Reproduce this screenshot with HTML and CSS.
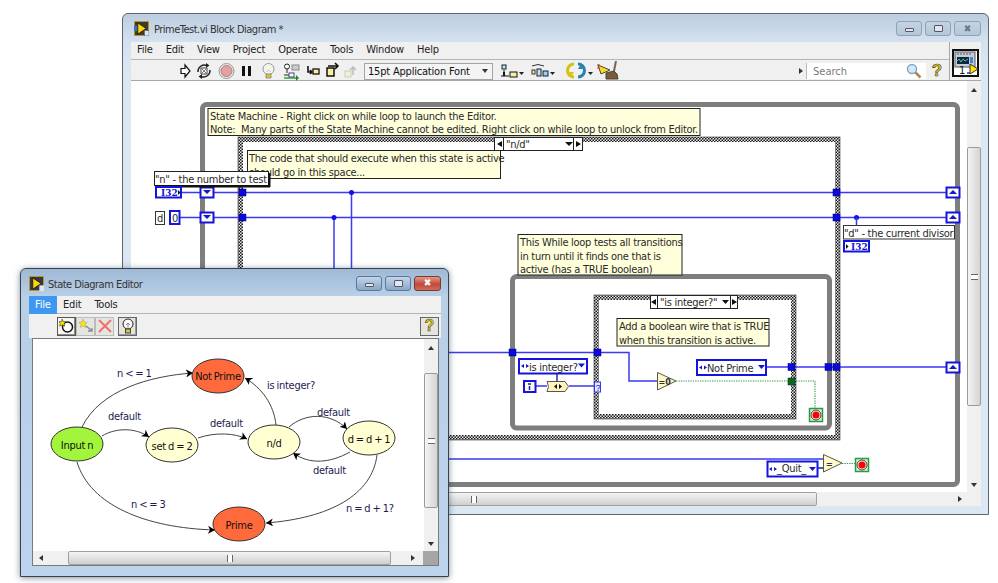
FILE: index.html
```html
<!DOCTYPE html>
<html lang="en">
<head>
<meta charset="utf-8">
<title>PrimeTest.vi Block Diagram</title>
<link rel="stylesheet" href="styles.css">
</head>
<body>
<div class="desktop">

<section class="win win-back">
  <header class="titlebar">
    <svg class="appicon" viewBox="0 0 16 16"><rect width="16" height="16" fill="#c89a20"/><rect x="1" y="1" width="14" height="14" fill="#3c3a30"/><rect x="0" y="5" width="4" height="6" fill="#3a70c0"/><path d="M4 2 L13 8 L4 14Z" fill="#ffd800" stroke="#222"/><rect x="11" y="10" width="5" height="6" fill="#dfe6f2" stroke="#444" stroke-width=".6"/></svg>
    <span class="wintitle">PrimeTest.vi Block Diagram *</span>
    <div class="winbtns">
      <span class="wbtn"><i class="g-min"></i></span>
      <span class="wbtn"><i class="g-max"></i></span>
      <span class="wbtn wbtn-close">✖</span>
    </div>
  </header>
  <div class="chrome">
    <div class="bars">
      <nav class="menubar"><span>File</span><span>Edit</span><span>View</span><span>Project</span><span>Operate</span><span>Tools</span><span>Window</span><span>Help</span></nav>
      <div class="toolbar">
        <svg class="tb-run" width="183" height="20" viewBox="176 60 183 20">
          <path d="M181 70 l0 -2.500 h4 v-3.500 l5 6 -5 6 v-3.500 h-4z" fill="#fff" stroke="#111" stroke-width="1.200"/>
          <path d="M198 71 a6.500 6.500 0 0 1 9 -6.500 M210 69 a6.500 6.500 0 0 1 -9 6.500" fill="none" stroke="#222" stroke-width="1.400"/><path d="M206 62l3.500 2.500-3.500 2.500zM202 73l-3.500 2.500 3.500 2.500z" fill="#222"/><path d="M201 67h6v6h-6z" fill="#fff" stroke="#444"/><path d="M202 68l4 4M206 68l-4 4" stroke="#444" stroke-width=".7"/>
          <circle cx="226.500" cy="70" r="7.500" fill="#e8e8e8" stroke="#999"/><circle cx="226.500" cy="70" r="5.500" fill="#e4a0a0" stroke="#b08080"/>
          <rect x="242" y="65" width="3" height="10" fill="#111"/><rect x="248" y="65" width="3" height="10" fill="#111"/>
          <circle cx="268.500" cy="68" r="5.500" fill="#f4f4ee" stroke="#999"/><path d="M266.500 71l2-2 2 2" fill="none" stroke="#aaa" stroke-width=".7"/><path d="M266 73h5v4h-5z" fill="#e0c040" stroke="#777" stroke-width=".7"/>
          <circle cx="287" cy="65.500" r="2.500" fill="#fff" stroke="#222"/><path d="M287 68v4M284 74h5" stroke="#222" fill="none"/><rect x="292" y="64" width="7" height="5" fill="#ccc" stroke="#888"/><path d="M284 77h14" stroke="#3a3" stroke-width="1.500"/><path d="M296 74l3 3-3 3z" fill="#282"/><rect x="289" y="72" width="5" height="4" fill="#fff" stroke="#448"/>
          <path d="M308 65v6h4M310 69l2 2-2 2" fill="none" stroke="#111" stroke-width="1.600"/><rect x="313" y="68" width="6" height="5" fill="#f8efa0" stroke="#111" stroke-width="1.300"/>
          <rect x="327" y="67" width="7" height="8" fill="#f8efa0" stroke="#111" stroke-width="1.500"/><path d="M328 65h9M335 62l3 3-3 3" fill="none" stroke="#111" stroke-width="1.600"/>
          <rect x="345" y="70" width="6" height="6" fill="#f4f0c8" stroke="#ccc"/><path d="M353 74v-7M350 69l3-3 3 3" fill="none" stroke="#bbb" stroke-width="1.500"/>
        </svg>
        <div class="fontsel"><span>15pt Application Font</span><i class="caret"></i></div>
        <svg class="tb-align" width="124" height="20" viewBox="498 60 124 20">
          <rect x="502" y="64" width="4" height="4" fill="#cde" stroke="#123"/><path d="M504 69v3M501 75h8" stroke="#111"/><path d="M504 71v4" stroke="#111" stroke-width="2"/><rect x="510" y="71" width="7" height="5" fill="#f8efa0" stroke="#111"/><path d="M519 71h5l-2.500 3z" fill="#222"/>
          <path d="M532 65 q6 -3 12 0" fill="none" stroke="#333"/><rect x="532" y="69" width="3" height="4" fill="#f8efa0" stroke="#333"/><rect x="537" y="68" width="4" height="7" fill="#cde" stroke="#123"/><rect x="543" y="70" width="5" height="5" fill="#9cf" stroke="#123"/><path d="M550 71h5l-2.500 3z" fill="#222"/>
          <path d="M574 63a6.500 6.500 0 0 0 0 13" fill="none" stroke="#d8c010" stroke-width="3"/><path d="M578 63a6.500 6.500 0 0 1 0 13" fill="none" stroke="#2a80b0" stroke-width="3"/><path d="M569 71l5 0-2.500 4z" fill="#d8c010"/><path d="M578 68l5 0-2.500-4z" fill="#2a80b0"/><path d="M588 71h5l-2.500 3z" fill="#222"/>
          <path d="M598 64l12 5-9 4z" fill="#f4dc20" stroke="#444"/><path d="M597 64h3M597 67h3" stroke="#d33"/><path d="M616 60l-2 10" stroke="#765" stroke-width="2"/><path d="M606 72l8-2 3 3 1 5h-12z" fill="#7a5a38" stroke="#443"/>
        </svg>
        <div class="searchwrap">
          <i class="srch-arrow"></i>
          <div class="search"><span>Search</span>
            <svg width="16" height="16" viewBox="0 0 16 16"><circle cx="6" cy="6" r="4.500" fill="#d4e8fa" stroke="#7ea8c8" stroke-width="1.500"/><path d="M9.500 9.500l5 5" stroke="#b08858" stroke-width="2.500"/></svg>
          </div>
          <span class="help">?</span>
        </div>
      </div>
    </div>
    <div class="connector">
      <svg width="27" height="28" viewBox="0 0 27 28"><rect x="1" y="1" width="25" height="26" fill="#fff" stroke="#111" stroke-width="2"/><rect x="3" y="3" width="20" height="15" fill="#c8ccd4" stroke="#556"/><rect x="5" y="8" width="12" height="7" fill="#125" /><path d="M5 12l2-2 2 3 2-3 2 2 3-2" stroke="#4d4" fill="none"/><rect x="18" y="8" width="3" height="6" fill="#48c"/><path d="M5 5h15" stroke="#556" stroke-dasharray="2 1"/><text class="conn-num" x="7" y="25">1</text><path d="M15 24h4" stroke="#23d" stroke-width="1.500"/><path d="M18 15l8 5-8 5z" fill="#ffe600" stroke="#333"/></svg>
    </div>
  </div>
  <div class="contentrow">
    <svg class="canvas" width="836" height="411" viewBox="131 81 836 411">
      <defs>
        <pattern id="chk" width="3" height="3" patternUnits="userSpaceOnUse"><rect width="3" height="3" fill="#e6e6e6"/><rect width="1.500" height="1.500" fill="#1a1a1a"/><rect x="1.500" y="1.500" width="1.500" height="1.500" fill="#1a1a1a"/></pattern>
      </defs>
      <!-- outer while loop -->
      <rect class="loop" x="202.500" y="104.500" width="755" height="380" rx="4"/>
      <!-- outer case -->
      <rect class="frame" x="240.500" y="139.500" width="597" height="298"/>
      <rect class="edge" x="238" y="137" width="602" height="303"/>
      <!-- wires -->
      <path class="wire" d="M182 192.500H947M180 217.500H947M334 217.500V300M351.500 192.500V300M767 367H947M448 352.500H597H629V381H657M448 459H824"/>
      <circle class="dot" cx="351.500" cy="192.500" r="2.500"/><circle class="dot" cx="334" cy="217.500" r="2.500"/><circle class="dot" cx="856.500" cy="217.500" r="2.500"/>
      <path class="wire" d="M856.500 217.500V226M536 386H547M569 386H595"/>
      <path class="wire-dark" d="M557 374V381M818 468H824"/>
      <!-- inner while loop -->
      <rect class="loop" x="512.500" y="276.500" width="317" height="151.500" rx="4"/>
      <!-- inner case -->
      <rect class="frame" x="596.500" y="297.500" width="197" height="119"/>
      <rect class="edge" x="594" y="295" width="202" height="124"/>
      <path class="wire-bool" d="M676 381H815V408M842 463.500H855"/>
      <!-- tunnels -->
      <g class="tunnel"><rect x="239" y="189" width="7" height="7"/><rect x="239" y="214" width="7" height="7"/><rect x="833" y="189" width="7" height="7"/><rect x="833" y="214" width="7" height="7"/><rect x="509" y="349" width="7" height="7"/><rect x="594" y="349" width="7" height="7"/><rect x="788" y="363.500" width="7" height="7"/><rect x="825" y="363.500" width="7" height="7"/><rect x="833" y="363.500" width="7" height="7"/></g>
      <rect class="tunnel-bool" x="788" y="378" width="7" height="7"/>
      <!-- shift registers -->
      <g class="sr"><rect x="200.500" y="187.500" width="13" height="10"/><rect x="200.500" y="212.500" width="13" height="10"/><rect x="946.500" y="187.500" width="13" height="10"/><rect x="946.500" y="212.500" width="13" height="10"/><rect x="946.500" y="362.500" width="13" height="10"/></g>
      <g class="sr-arrow"><path d="M203 190h8l-4 4z"/><path d="M203 215h8l-4 4z"/><path d="M949 194h8l-4-4z"/><path d="M949 219h8l-4-4z"/><path d="M949 369h8l-4-4z"/></g>
      <!-- selectors -->
      <rect class="sel" x="494.500" y="137.500" width="88" height="13"/><path class="sel-line" d="M503.500 137.500v13M573.500 137.500v13"/><path class="blk" d="M502 141v6l-5-3zM576 141v6l5-3zM565 142h8l-4 4z"/>
      <text class="t" x="506" y="148">"n/d"</text>
      <rect class="sel" x="650.500" y="295.500" width="87" height="13"/><path class="sel-line" d="M657.500 295.500v13M730.500 295.500v13"/><path class="blk" d="M656 299v6l-5-3zM732 299v6l5-3zM722 300h7l-3.500 4z"/>
      <text class="t" x="660" y="306">"is integer?"</text>
      <!-- notes -->
      <rect class="note" x="208" y="108.500" width="492" height="27"/>
      <text class="t" x="210" y="120">State Machine - Right click on while loop to launch the Editor.</text>
      <text class="t" x="210" y="133">Note:  Many parts of the State Machine cannot be edited. Right click on while loop to unlock from Editor.</text>
      <rect class="note" x="247.500" y="150.500" width="253" height="28"/>
      <text class="t" x="249" y="162">The code that should execute when this state is active</text>
      <text class="t" x="249" y="176">should go in this space...</text>
      <rect class="note" x="518" y="234.500" width="164" height="40.500"/>
      <text class="t" x="520" y="246">This While loop tests all transitions</text>
      <text class="t" x="520" y="259.500">in turn until it finds one that is</text>
      <text class="t" x="520" y="272.500">active (has a TRUE boolean)</text>
      <rect class="note" x="617" y="318.500" width="152" height="27.500"/>
      <text class="t" x="619" y="330">Add a boolean wire that is TRUE</text>
      <text class="t" x="619" y="343.500">when this transition is active.</text>
      <!-- labels -->
      <rect class="lbl-sel" x="154.500" y="171.500" width="114" height="14"/><rect class="lbl-shadow" x="156" y="185" width="114" height="2.500"/><rect class="lbl-shadow" x="268" y="173" width="2.500" height="14"/>
      <text class="t" x="155" y="183">"n" - the number to test</text>
      <rect class="lbl" x="843.500" y="225.500" width="111" height="13.500"/>
      <text class="t" x="844" y="237">"d" - the current divisor</text>
      <rect class="lbl" x="155.500" y="211.500" width="9" height="13"/>
      <text class="t" x="157" y="222">d</text>
      <!-- numeric terminals -->
      <rect class="ctl" x="156" y="187" width="25" height="10.500"/>
      <text class="i32" x="161" y="196">I32</text><path class="blk" d="M178 190v5l2.500-2.500z"/>
      <rect class="ctl" x="844" y="241" width="25" height="10.500"/>
      <text class="i32" x="851" y="250">I32</text><path class="blk" d="M846 244v5l2.500-2.500z"/>
      <rect class="ctl" x="170" y="211" width="9.500" height="13"/><text class="t" x="172" y="222">0</text>
      <!-- enums -->
      <rect class="ctl" x="519" y="359" width="68" height="14.500"/><path class="enum-mark" d="M524 364v4l-3-2zM526 364v4l3-2zM578 363.500h7l-3.500 4z"/><text class="t" x="529" y="371">is integer?</text>
      <rect class="ctl" x="697" y="360" width="69" height="15"/><path class="enum-mark" d="M702 365.500v4l-3-2zM704 365.500v4l3-2zM758 365h7l-3.500 4z"/><text class="t" x="707" y="372">Not Prime</text>
      <rect class="ctl" x="767.500" y="461.500" width="50" height="15"/><path class="enum-mark" d="M772 467v4l-3-2zM774 467v4l3-2zM809 467h7l-3.500 4z"/><text class="t" x="777" y="472">_Quit_</text>
      <!-- iteration -->
      <rect class="ctl-y" x="524" y="381" width="11.500" height="11"/><path class="iter" d="M528 384h3M529.500 386v4"/>
      <path class="conv" d="M547 381.500h18l3.500 5-3.500 5h-18l1.500-5z"/><path class="blk" d="M557 384v5l-3-2.500zM559 384v5l3-2.500z"/>
      <rect class="cs" x="594.500" y="382" width="6" height="10"/><text class="q" x="595.500" y="391">?</text>
      <!-- primitives -->
      <path class="prim" d="M657.500 372.500l18.500 8.500-18.500 9z"/><text class="prim-t" x="658.500" y="385">=0</text>
      <path class="prim" d="M823.500 454.500l18.500 8.500-18.500 9z"/><text class="prim-t" x="826" y="467">=</text>
      <!-- stop terminals -->
      <g><rect class="stop" x="809.500" y="408.500" width="13" height="13"/><circle class="stop-ring" cx="816" cy="415" r="5"/><circle class="stop-dot" cx="816" cy="415" r="3.500"/></g>
      <g><rect class="stop" x="855.500" y="458.500" width="13" height="13"/><circle class="stop-ring" cx="862" cy="465" r="5"/><circle class="stop-dot" cx="862" cy="465" r="3.500"/></g>
    </svg>
    <div class="vscroll">
      <i class="arr-up"></i>
      <div class="vthumb"><b class="grip-v"></b></div>
      <i class="arr-down"></i>
    </div>
  </div>
  <div class="hrow">
    <div class="hscroll"><div class="hthumb"><b class="grip-h"></b></div><i class="arr-right"></i></div>
    <div class="corner"></div>
  </div>
</section>

<section class="win win-front">
  <header class="titlebar">
    <svg class="appicon" viewBox="0 0 16 16"><rect width="16" height="16" fill="#c89a20"/><rect x="1" y="1" width="14" height="14" fill="#30384a"/><path d="M4 2 L13 8 L4 14Z" fill="#ffd800" stroke="#222"/><rect x="11" y="10" width="5" height="6" fill="#dfe6f2"/></svg>
    <span class="wintitle">State Diagram Editor</span>
    <div class="winbtns">
      <span class="wbtn wbtn-active"><i class="g-min"></i></span>
      <span class="wbtn wbtn-active"><i class="g-max"></i></span>
      <span class="wbtn wbtn-red">✖</span>
    </div>
  </header>
  <nav class="menubar menubar-front"><span class="on">File</span><span>Edit</span><span>Tools</span></nav>
  <div class="toolbar toolbar-front">
    <span class="tbtn tbtn-on"><svg width="16" height="16" viewBox="0 0 16 16"><circle cx="8.500" cy="9" r="5" fill="#fff" stroke="#111" stroke-width="1.500"/><path d="M3 1l1.200 2.500 2.800.2-2 1.800.6 2.700L3 6.800.6 8.200l.6-2.700-1.200-1.800 2.800-.2z" fill="#ffe600" stroke="#111" stroke-width=".5"/></svg></span>
    <span class="tbtn"><svg width="16" height="16" viewBox="0 0 16 16"><path d="M5 1l1.200 3 3 .5-2.200 2 .6 3L5 8 2.400 9.500l.6-3L.8 4.500l3-.5z" fill="#ffe600" stroke="#999" stroke-width=".5"/><path d="M8 8l5 4M10 13h4v-3" fill="none" stroke="#888" stroke-width="1.300"/></svg></span>
    <span class="tbtn"><svg width="16" height="16" viewBox="0 0 16 16"><path d="M2 2l12 12M14 2L2 14" stroke="#f07070" stroke-width="2"/></svg></span>
    <span class="tbtn tbtn-gap"><svg width="16" height="16" viewBox="0 0 16 16"><circle cx="8" cy="6" r="5" fill="#fff" stroke="#222"/><path d="M6 7l2-2 2 2M8 5v5" stroke="#666" fill="none" stroke-width=".7"/><rect x="5.500" y="11" width="5" height="4" fill="#e0c040" stroke="#444"/></svg></span>
    <span class="tbtn tbtn-help">?</span>
  </div>
  <div class="editor">
    <div class="contentrow">
      <svg class="graph" width="391" height="212" viewBox="33 339 391 212">
        <defs>
          <marker id="ah" markerWidth="8" markerHeight="8" refX="7" refY="4" orient="auto" markerUnits="userSpaceOnUse"><path d="M0 0L7 4L0 8L2 4z" fill="#000"/></marker>
        </defs>
        <path class="edge-g" d="M82 427C100 390 150 376 193 373"/>
        <path class="edge-g" d="M102 436C115 428 135 427 149 437"/>
        <path class="edge-g" d="M198 438C215 432 235 433 247 439"/>
        <path class="edge-g" d="M276 425C274 405 262 388 245 378"/>
        <path class="edge-g" d="M289 427C305 413 330 412 347 429"/>
        <path class="edge-g" d="M350 452C330 463 310 465 293 453"/>
        <path class="edge-g" d="M377 455C372 495 330 518 266 523"/>
        <path class="edge-g" d="M77 462C90 505 145 528 215 530"/>
        <ellipse class="n-red" cx="218" cy="376" rx="26" ry="17"/><text class="nl" x="218" y="380">Not Prime</text>
        <ellipse class="n-green" cx="77" cy="444" rx="26" ry="17"/><text class="nl" x="77" y="449">Input n</text>
        <ellipse class="n-y" cx="172" cy="445" rx="26" ry="17"/><text class="nl" x="172" y="450">set d = 2</text>
        <ellipse class="n-y" cx="274" cy="442" rx="26" ry="17"/><text class="nl" x="274" y="447">n/d</text>
        <ellipse class="n-y" cx="369" cy="438" rx="26" ry="17"/><text class="nl" x="369" y="443">d = d + 1</text>
        <ellipse class="n-red" cx="239" cy="524" rx="26" ry="17"/><text class="nl" x="239" y="529">Prime</text>
        <text class="el" x="117" y="377">n &lt; = 1</text>
        <text class="el" x="108" y="420">default</text>
        <text class="el" x="210" y="427">default</text>
        <text class="el" x="267" y="389">is integer?</text>
        <text class="el" x="317" y="416">default</text>
        <text class="el" x="313" y="474">default</text>
        <text class="el" x="346" y="512">n = d + 1?</text>
        <text class="el" x="131" y="508">n &lt; = 3</text>
      </svg>
      <div class="vscroll vscroll-front">
        <i class="arr-up"></i>
        <div class="vthumb"><b class="grip-v"></b></div>
        <i class="arr-down"></i>
      </div>
    </div>
    <div class="hrow hrow-front">
      <div class="hscroll"><i class="arr-left"></i><div class="hthumb"><b class="grip-h"></b></div><i class="arr-right"></i></div>
      <div class="corner corner-front"></div>
    </div>
  </div>
</section>

</div>
</body>
</html>
```

FILE: styles.css
```css
* { box-sizing: border-box; }
html, body { margin: 0; padding: 0; background: #fff; }
.desktop { position: relative; width: 998px; height: 583px; overflow: hidden; font-family: "DejaVu Sans Condensed", "DejaVu Sans", sans-serif; font-stretch: condensed; color: #111; }

/* windows */
.win { position: absolute; display: flex; flex-direction: column; border: 1px solid #5e6670; border-radius: 6px 6px 0 0; }
.win-back { left: 122px; top: 13px; width: 867px; height: 502px; padding: 0 7px 8px 8px; background: linear-gradient(#bccde0 0, #d4e1ef 28px, #dbe7f3 60px); }
.win-front { left: 20px; top: 268px; width: 429px; height: 309px; padding: 0 7px 10px 8px; background: linear-gradient(#9fb9d6 0, #b8cfe6 27px, #bcd4ec 100%); box-shadow: 0 1px 6px rgba(30, 50, 70, .55); border-color: #39424c; }

.titlebar { display: flex; align-items: center; height: 28px; flex: none; padding-top: 1px; }
.win-front .titlebar { height: 27px; padding-top: 1px; }
.wintitle { font-size: 11px; letter-spacing: -.5px; color: #333; padding-top: 1px; }
.win-front .wintitle { padding-top: 2px; }
.appicon { width: 15px; height: 15px; margin: 0 5px 0 3px; flex: none; }
.win-front .appicon { margin: 0 4px 0 0; }
.winbtns { display: flex; gap: 3px; margin-left: auto; }
.wbtn { display: flex; align-items: center; justify-content: center; width: 26px; height: 15px; border: 1px solid #8fa2b6; border-radius: 3px; background: linear-gradient(#c5d4e4, #b4c6d9); font-size: 10px; line-height: 1; color: #6a7a8a; }
.wbtn-close { width: 27px; }
.wbtn-active { background: linear-gradient(#c2d5ea, #88a6c8); border-color: #5f7894; }
.wbtn-red { width: 27px; background: linear-gradient(#e49a8c, #c04a3a 55%, #cf6c58); border-color: #7a3a30; color: #fff; }
.g-min { display: block; width: 9px; height: 4px; margin-top: 3px; background: #dfe8f0; border: 1px solid #556; border-radius: 1px; }
.g-max { display: block; width: 9px; height: 7px; background: #dfe8f0; border: 1px solid #556; border-radius: 1px; }

/* bars */
.chrome { display: flex; flex: none; height: 39px; background: #f0f0f0; }
.bars { flex: 1; display: flex; flex-direction: column; min-width: 0; }
.menubar { display: flex; align-items: center; height: 18px; flex: none; padding: 0 0 2px 6px; gap: 13px; background: #f0f0f0; border-bottom: 1px solid #b4b4b4; font-size: 11px; letter-spacing: -.2px; color: #222; }
.toolbar { display: flex; align-items: center; height: 21px; flex: none; background: #f0f0f0; border-bottom: 1px solid #a8a8a8; padding: 2px 0 0 45px; }
.connector { flex: none; width: 32px; display: flex; align-items: center; justify-content: center; border-left: 1px solid #a8a8a8; border-bottom: 1px solid #a8a8a8; padding-top: 4px; }
.conn-num { font-size: 11px; fill: #111; }
.fontsel { display: flex; align-items: center; width: 129px; height: 17px; margin-left: 5px; padding-left: 3px; border: 1px solid #a4a4a4; background: #f4f4f4; font-size: 11px; letter-spacing: -.2px; white-space: nowrap; }
.caret { margin-left: auto; margin-right: 4px; border: 3.500px solid transparent; border-top: 4px solid #333; border-bottom: 0; }
.tb-align { margin-left: 5px; flex: none; }
.tb-run { flex: none; }
.searchwrap { margin-left: auto; display: flex; align-items: center; }
.srch-arrow { border: 3px solid transparent; border-left: 4px solid #333; border-right: 0; margin-right: 3px; }
.search { display: flex; align-items: center; justify-content: space-between; width: 120px; height: 16px; padding: 0 4px 0 6px; background: #fff; border-left: 1px solid #b8b8b8; font-size: 11px; color: #7a7a7a; }
.help { width: 22px; text-align: center; font: bold 17px "Liberation Sans", sans-serif; color: #e4c400; -webkit-text-stroke: .6px #444; margin-right: 1px; }

/* content */
.contentrow { display: flex; flex: 1; min-height: 0; background: #fff; }
.canvas, .graph { display: block; flex: none; background: #fff; }
.vscroll { flex: 1; display: flex; flex-direction: column; align-items: center; background: #f0f0f0; padding: 7px 0 5px; }
.vthumb { flex: none; width: 100%; height: 259px; margin-top: 55px; display: flex; align-items: center; justify-content: center; border: 1px solid #9a9a9a; border-radius: 2px; background: linear-gradient(90deg, #f4f4f4, #d4d4d4); }
.grip-v { width: 7px; height: 6px; border-top: 1px solid #666; border-bottom: 1px solid #666; background: linear-gradient(#fff 45%, #666 45%, #666 60%, #fff 60%); }
.grip-h { width: 6px; height: 7px; border-left: 1px solid #666; border-right: 1px solid #666; background: linear-gradient(90deg, #fff 45%, #666 45%, #666 60%, #fff 60%); }
.arr-up { border: 3.500px solid transparent; border-bottom: 4px solid #333; border-top: 0; }
.arr-down { margin-top: auto; border: 3.500px solid transparent; border-top: 4px solid #333; border-bottom: 0; }
.arr-right { margin-left: auto; margin-right: 5px; border: 3.500px solid transparent; border-left: 4px solid #333; border-right: 0; }
.arr-left { margin: 0 25px 0 6px; border: 3.500px solid transparent; border-right: 4px solid #333; border-left: 0; }
.hrow { display: flex; flex: none; height: 14px; background: #f0f0f0; }
.hscroll { flex: 1; display: flex; align-items: center; }
.hthumb { width: 686px; height: 14px; display: flex; align-items: center; justify-content: center; border: 1px solid #a0a0a0; border-radius: 2px; background: linear-gradient(#f4f4f4, #cfcfcf); }
.corner { flex: none; width: 14px; background: #f0f0f0; }

/* editor */
.menubar-front { padding: 0; gap: 0; }
.menubar-front span { padding: 0 6px; margin-right: 1px; line-height: 18px; }
.menubar-front .on { background: #3e97f0; color: #fff; padding: 0 6px; margin-right: 0; width: 28px; }
.toolbar-front { height: 24px; padding: 0 0 0 28px; border-bottom: 0; gap: 0; }
.tbtn { display: flex; align-items: center; justify-content: center; width: 19px; height: 19px; border: 1px solid #bcbcbc; background: #e4e4e0; }
.tbtn-on { background: #f6f6ee; border-color: #555; box-shadow: inset -1px -1px 0 #888; }
.tbtn-gap { margin-left: 4px; border-color: #666; box-shadow: inset -1px -1px 0 #999; }
.tbtn-help { margin-left: auto; margin-right: 2px; font: bold 16px "Liberation Sans", sans-serif; color: #e4c400; -webkit-text-stroke: .5px #444; border-color: #666; }
.editor { flex: 1; display: flex; flex-direction: column; margin: 0 2px 0 3px; border: 1px solid #7a7a7a; background: #fff; min-height: 0; }
.vscroll-front { flex: 1; }
.vscroll-front .vthumb { height: 135px; margin-top: 23px; }
.hrow-front .hthumb { width: 323px; }
.hrow-front .arr-right { margin-right: 8px; }
.corner-front { width: 15px; background: #a6a6a6; }

/* block diagram */
.loop { fill: none; stroke: #7e7e7e; stroke-width: 5; }
.frame { fill: none; stroke: url(#chk); stroke-width: 5; }
.edge { fill: none; stroke: #333; stroke-width: .6; }
.wire { fill: none; stroke: #3a3af4; stroke-width: 1.500; }
.wire-dark { fill: none; stroke: #1a1ac0; stroke-width: 1.400; }
.wire-bool { fill: none; stroke: #2f9a4a; stroke-width: 1.100; stroke-dasharray: 1.300 1.100; }
.dot { fill: #1010e0; }
.tunnel rect { fill: #0a0ae0; stroke: #000060; stroke-width: .5; }
.tunnel-bool { fill: #0a6a1a; stroke: #033; stroke-width: .5; }
.sr rect { fill: #fffde0; stroke: #1414e0; stroke-width: 2; }
.sr-arrow path { fill: #1414e0; }
.sel { fill: #fff; stroke: #222; stroke-width: 1; }
.sel-line { fill: none; stroke: #222; stroke-width: 1; }
.blk { fill: #111; }
.note { fill: #ffffdc; stroke: #222; stroke-width: 1; }
.lbl { fill: #fff; stroke: #333; stroke-width: 1; }
.lbl-sel { fill: #fff; stroke: #222; stroke-width: 1; }
.lbl-shadow { fill: #111; }
.t { font: 11px "DejaVu Sans Condensed", "DejaVu Sans", sans-serif; font-stretch: condensed; letter-spacing: -.28px; fill: #2a2a2a; white-space: pre; }
.i32 { font: bold 9px "DejaVu Serif", serif; fill: #1818d0; }
.ctl { fill: #fff; stroke: #1414e0; stroke-width: 2; }
.ctl-y { fill: #fffde0; stroke: #1414e0; stroke-width: 2; }
.enum-mark { fill: #1414d8; }
.iter { fill: none; stroke: #1414d8; stroke-width: 1.500; }
.conv { fill: #fff4c0; stroke: #555; stroke-width: 1; }
.cs { fill: #e4e8ff; stroke: #3a3ae8; stroke-width: 1; }
.q { font: 9px "Liberation Sans", sans-serif; fill: #1414d8; }
.prim { fill: #fff8cc; stroke: #5a5a40; stroke-width: 1; }
.prim-t { font: bold 8px "DejaVu Sans", sans-serif; fill: #333; }
.stop { fill: #d8f0d8; stroke: #2e9a3e; stroke-width: 1.500; }
.stop-ring { fill: #eee; stroke: #444; stroke-width: 1; }
.stop-dot { fill: #f00; }

/* state graph */
.edge-g { fill: none; stroke: #444; stroke-width: 1; marker-end: url(#ah); }
.n-red { fill: #ff6a3c; stroke: #333; stroke-width: 1; }
.n-green { fill: #a2f53c; stroke: #333; stroke-width: 1; }
.n-y { fill: #ffffd2; stroke: #333; stroke-width: 1; }
.nl { font: 11px "DejaVu Sans Condensed", "DejaVu Sans", sans-serif; font-stretch: condensed; letter-spacing: -.28px; word-spacing: -.7px; fill: #111; text-anchor: middle; }
.el { font: 11px "DejaVu Sans Condensed", "DejaVu Sans", sans-serif; font-stretch: condensed; letter-spacing: -.28px; word-spacing: -.7px; fill: #1c1c50; }
```
